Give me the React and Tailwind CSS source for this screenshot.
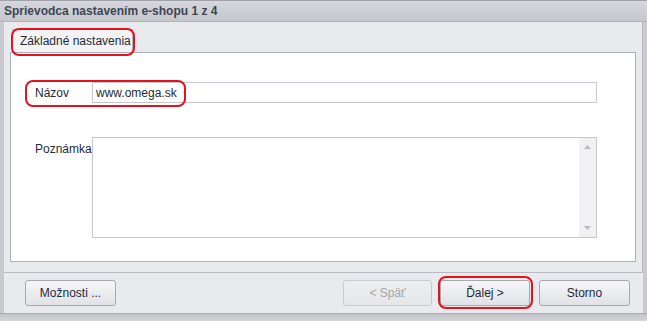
import React from "react";

function Btn({ children, disabled, className = "" }) {
  return (
    <div
      className={
        "flex h-[26px] items-center justify-center rounded-[3px] border bg-gradient-to-b text-[12px] " +
        (disabled
          ? "border-[#c9cacf] from-[#eeeef1] to-[#e6e7ea] text-[#a3a5aa] "
          : "border-[#a7a9ae] from-[#f6f6f8] to-[#e1e2e6] text-[#1e2a3a] ") +
        className
      }
    >
      {children}
    </div>
  );
}

export default function App() {
  return (
    <div
      className="relative flex h-[321px] w-[647px] flex-col overflow-hidden bg-[#e9eaee]"
      style={{ fontFamily: "'Liberation Sans', Arial, sans-serif" }}
    >
      {/* title bar */}
      <div className="flex h-[23px] items-center border-t border-b border-t-[#a2a3a8] border-b-[#b3b4b9] bg-gradient-to-b from-[#d6d7dc] to-[#c6c7cc] pl-[4px] text-[12px] font-bold text-[#3d4653]">
        Sprievodca nastavením e-shopu 1 z 4
      </div>

      {/* body */}
      <div className="flex flex-1 flex-col border-l-[4px] border-r-[4px] border-l-[#c9cace] border-r-[#c9cace]">
        {/* page */}
        <div className="flex h-[251px] flex-col border-r border-b border-[#b9bac0] pl-[6px] pr-[6px]">
          <div className="flex h-[30px] items-end">
            <div className="ml-[2px] flex h-[23px] w-[121px] items-center whitespace-nowrap border-t border-l border-r border-[#babbc0] bg-[#f4f4f6] pl-[7px] text-[12px] text-[#1e2a3a]">
              Základné nastavenia
            </div>
          </div>
          <div className="flex h-[210px] flex-col border border-[#aeb0b6] bg-white pl-[24px] pr-[38px] pt-[29px]">
            <div className="flex h-[21px] items-center">
              <div className="w-[57px] text-[12px] text-[#1e2a3a]">Názov</div>
              <div className="flex h-[21px] flex-1 items-center border border-[#c6c8cd] pl-[3px] text-[12px] text-[#1e2a3a]">
                www.omega.sk
              </div>
            </div>
            <div className="mt-[34px] flex h-[101px]">
              <div className="w-[57px] pt-[3px] text-[12px] text-[#1e2a3a]">Poznámka</div>
              <div className="flex flex-1 border border-[#c6c8cd]">
                <div className="flex-1" />
                <div className="flex w-[17px] flex-col items-center justify-between bg-[#f1f1f3] py-[7px]">
                  <svg width="7" height="4" viewBox="0 0 7 4">
                    <path d="M0 4 L3.5 0 L7 4 Z" fill="#b9bbc0" />
                  </svg>
                  <svg width="7" height="4" viewBox="0 0 7 4">
                    <path d="M0 0 L3.5 4 L7 0 Z" fill="#b9bbc0" />
                  </svg>
                </div>
              </div>
            </div>
          </div>
        </div>

        {/* footer */}
        <div className="flex h-[40px] items-center pl-[21px] pr-[13px]">
          <Btn className="w-[91px]">Možnosti ...</Btn>
          <div className="flex-1" />
          <Btn disabled className="w-[89px]">&lt; Späť</Btn>
          <Btn className="ml-[8px] w-[90px]">Ďalej &gt;</Btn>
          <Btn className="ml-[9px] w-[91px]">Storno</Btn>
        </div>
      </div>
      {/* bottom band */}
      <div className="h-[8px] border-t border-[#a9aaaf] bg-gradient-to-b from-[#c3c4c8] to-[#d5d6da]" />

      {/* red annotation outlines */}
      <div className="pointer-events-none absolute left-[11px] top-[28px] h-[28px] w-[124px] rounded-[8px] border-[2px] border-[#e3121c]" />
      <div className="pointer-events-none absolute left-[25px] top-[80px] h-[27px] w-[161px] rounded-[8px] border-[2px] border-[#e3121c]" />
      <div className="pointer-events-none absolute left-[438px] top-[276px] h-[33px] w-[95px] rounded-[8px] border-[2px] border-[#e3121c]" />
    </div>
  );
}
